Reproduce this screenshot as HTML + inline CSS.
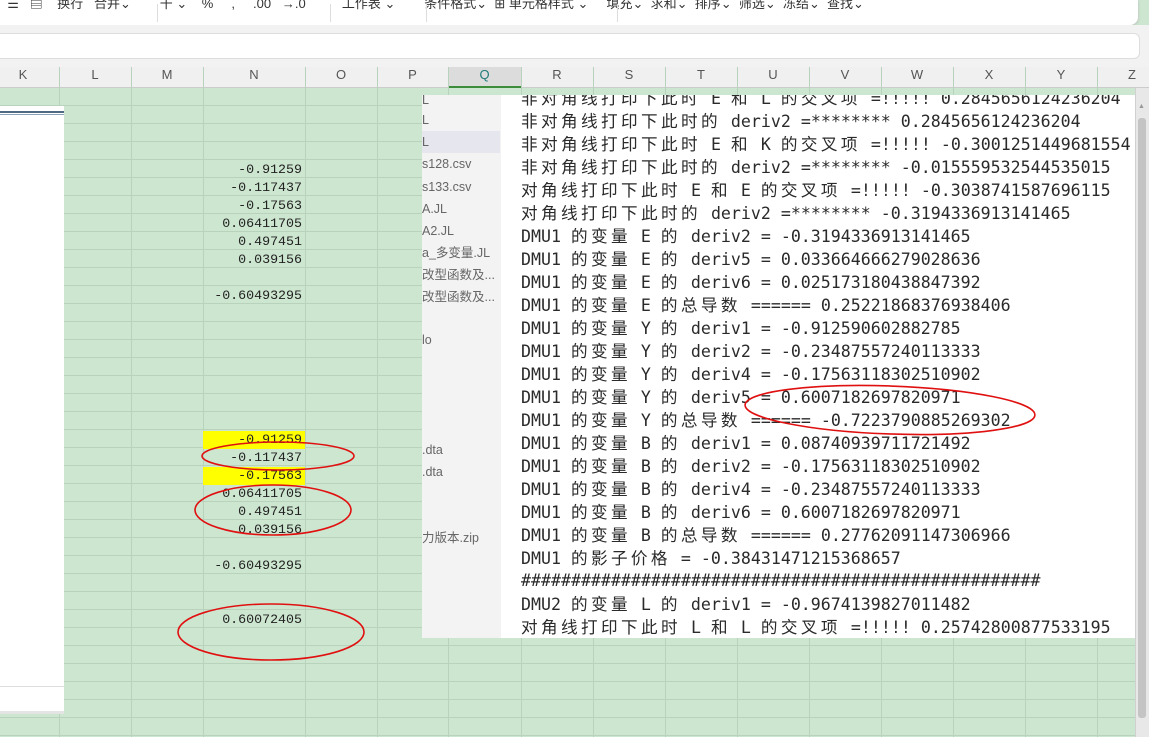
<!DOCTYPE html>
<html><head><meta charset="utf-8"><style>
*{margin:0;padding:0;box-sizing:border-box}
body{width:1149px;height:737px;overflow:hidden;background:#cde6d0;position:relative;font-family:"Liberation Sans","Noto Sans CJK SC",sans-serif}
.a{position:absolute}
.vl{position:absolute;width:1px;background:#b9d2bc}
.hl{position:absolute;height:1px;left:0;width:1149px;background:#b9d2bc}
.hd{position:absolute;top:67px;font-size:13px;color:#555;text-align:center}
.num{position:absolute;right:847px;font-family:"Liberation Mono","DejaVu Sans Mono",monospace;font-size:13.3px;color:#222;height:18px;line-height:18px;white-space:pre}
.ln{position:absolute;left:521px;font-family:"DejaVu Sans Mono","Noto Sans CJK SC",monospace;font-size:16.6px;color:#2a2a2a;white-space:pre;line-height:23px;height:23px}
.c{font-family:"Noto Sans CJK SC",sans-serif;letter-spacing:3.4px}
.f{position:absolute;left:422px;font-size:12.5px;color:#666;white-space:pre;line-height:20px}
</style></head><body>
<!-- toolbar -->
<div class="a" style="left:0;top:0;width:1138px;height:25px;background:#fff;border-radius:0 0 8px 0;box-shadow:0 1px 3px #bbb"></div>
<div class="a" style="left:0;top:25px;width:1149px;height:42px;background:#f2f2f2"></div>
<div class="a" style="left:0;top:-7px;font-size:13px;color:#333;white-space:pre">  ☰   ▤    换行   合并⌄        干 ⌄    %     ,     .00   →.0          工作表 ⌄        条件格式⌄  ⊞ 单元格样式 ⌄     填充⌄  求和⌄  排序⌄  筛选⌄  冻结⌄  查找⌄</div>
<div class="a" style="left:157px;top:4px;width:1px;height:18px;background:#ddd"></div>
<div class="a" style="left:330px;top:4px;width:1px;height:18px;background:#ddd"></div>
<div class="a" style="left:426px;top:4px;width:1px;height:18px;background:#ddd"></div>
<div class="a" style="left:617px;top:4px;width:1px;height:18px;background:#ddd"></div>
<div class="a" style="left:0;top:33px;width:1140px;height:26px;background:#fff;border:1px solid #ddd;border-left:none;border-radius:0 6px 6px 0"></div>
<!-- headers -->
<div class="a" style="left:0;top:67px;width:1149px;height:21px;background:#f0f0f0;border-bottom:1px solid #ccc"></div>
<div class="a" style="left:448px;top:67px;width:73px;height:21px;background:#dcdcdc;border-bottom:2px solid #3c8c3c"></div>
<div class="hd" style="left:0;width:46px">K</div>
<div class="hd" style="left:59px;width:72px">L</div>
<div class="hd" style="left:131px;width:72px">M</div>
<div class="hd" style="left:203px;width:102px">N</div>
<div class="hd" style="left:305px;width:72px">O</div>
<div class="hd" style="left:377px;width:71px">P</div>
<div class="hd" style="left:448px;width:73px;color:#1f7a7a">Q</div>
<div class="hd" style="left:521px;width:72px">R</div>
<div class="hd" style="left:593px;width:72px">S</div>
<div class="hd" style="left:665px;width:72px">T</div>
<div class="hd" style="left:737px;width:72px">U</div>
<div class="hd" style="left:809px;width:72px">V</div>
<div class="hd" style="left:881px;width:72px">W</div>
<div class="hd" style="left:953px;width:72px">X</div>
<div class="hd" style="left:1025px;width:72px">Y</div>
<div class="hd" style="left:1112px;width:40px">Z</div>
<!-- grid -->
<div id="g"></div>
<div class="vl" style="left:59px;top:67px;height:670px"></div>
<div class="vl" style="left:131px;top:67px;height:670px"></div>
<div class="vl" style="left:203px;top:67px;height:670px"></div>
<div class="vl" style="left:305px;top:67px;height:670px"></div>
<div class="vl" style="left:377px;top:67px;height:670px"></div>
<div class="vl" style="left:448px;top:67px;height:670px"></div>
<div class="vl" style="left:521px;top:67px;height:670px"></div>
<div class="vl" style="left:593px;top:67px;height:670px"></div>
<div class="vl" style="left:665px;top:67px;height:670px"></div>
<div class="vl" style="left:737px;top:67px;height:670px"></div>
<div class="vl" style="left:809px;top:67px;height:670px"></div>
<div class="vl" style="left:881px;top:67px;height:670px"></div>
<div class="vl" style="left:953px;top:67px;height:670px"></div>
<div class="vl" style="left:1025px;top:67px;height:670px"></div>
<div class="vl" style="left:1097px;top:67px;height:670px"></div>
<div class="a" style="left:0;top:88px;width:1149px;height:649px;background:repeating-linear-gradient(to bottom,transparent 0,transparent 17px,#b9d2bc 17px,#b9d2bc 18px);background-position:0 0"></div>
<!-- left white panel -->
<div class="a" style="left:0;top:106px;width:64px;height:606px;background:#fff"></div>
<div class="a" style="left:0;top:111px;width:64px;height:4px;border-top:2px solid #4d6a85;border-bottom:1px solid #8aa0b5"></div>
<div class="a" style="left:0;top:686px;width:64px;height:1px;background:#ddd"></div>
<div class="a" style="left:0;top:711px;width:64px;height:3px;background:#e4e4e4"></div>
<!-- yellow -->
<div class="a" style="left:203px;top:431px;width:102px;height:18px;background:#ffff00"></div>
<div class="a" style="left:203px;top:467px;width:102px;height:18px;background:#ffff00"></div>
<div class="num" style="top:161px">-0.91259</div>
<div class="num" style="top:179px">-0.117437</div>
<div class="num" style="top:197px">-0.17563</div>
<div class="num" style="top:215px">0.06411705</div>
<div class="num" style="top:233px">0.497451</div>
<div class="num" style="top:251px">0.039156</div>
<div class="num" style="top:287px">-0.60493295</div>
<div class="num" style="top:431px">-0.91259</div>
<div class="num" style="top:449px">-0.117437</div>
<div class="num" style="top:467px">-0.17563</div>
<div class="num" style="top:485px">0.06411705</div>
<div class="num" style="top:503px">0.497451</div>
<div class="num" style="top:521px">0.039156</div>
<div class="num" style="top:557px">-0.60493295</div>
<div class="num" style="top:611px">0.60072405</div>
<!-- file panel -->
<div class="a" style="left:422px;top:95px;width:79px;height:543px;background:#f3f3f3"></div>
<div class="a" style="left:422px;top:131px;width:78px;height:22px;background:#e6e6ef"></div>
<div class="f" style="top:90px">L</div>
<div class="f" style="top:110px">L</div>
<div class="f" style="top:132px">L</div>
<div class="f" style="top:154px">s128.csv</div>
<div class="f" style="top:177px">s133.csv</div>
<div class="f" style="top:199px">A.JL</div>
<div class="f" style="top:221px">A2.JL</div>
<div class="f" style="top:243px">a_多变量.JL</div>
<div class="f" style="top:265px">改型函数及...</div>
<div class="f" style="top:287px">改型函数及...</div>
<div class="f" style="top:330px">lo</div>
<div class="f" style="top:440px">.dta</div>
<div class="f" style="top:462px">.dta</div>
<div class="f" style="top:528px">力版本.zip</div>
<!-- console -->
<div class="a" style="left:501px;top:95px;width:634px;height:543px;background:#fff;overflow:hidden">
<div style="position:absolute;left:-501px;top:-95px;width:1149px;height:737px">
<div class="ln" style="top:86px"><span class="c">非对角线打印下此时</span> E <span class="c">和</span> L <span class="c">的交叉项</span> =!!!!! 0.2845656124236204</div>
<div class="ln" style="top:109px"><span class="c">非对角线打印下此时的</span> deriv2 =******** 0.2845656124236204</div>
<div class="ln" style="top:132px"><span class="c">非对角线打印下此时</span> E <span class="c">和</span> K <span class="c">的交叉项</span> =!!!!! -0.3001251449681554</div>
<div class="ln" style="top:155px"><span class="c">非对角线打印下此时的</span> deriv2 =******** -0.015559532544535015</div>
<div class="ln" style="top:178px"><span class="c">对角线打印下此时</span> E <span class="c">和</span> E <span class="c">的交叉项</span> =!!!!! -0.3038741587696115</div>
<div class="ln" style="top:201px"><span class="c">对角线打印下此时的</span> deriv2 =******** -0.3194336913141465</div>
<div class="ln" style="top:224px">DMU1 <span class="c">的变量</span> E <span class="c">的</span> deriv2 = -0.3194336913141465</div>
<div class="ln" style="top:247px">DMU1 <span class="c">的变量</span> E <span class="c">的</span> deriv5 = 0.033664666279028636</div>
<div class="ln" style="top:270px">DMU1 <span class="c">的变量</span> E <span class="c">的</span> deriv6 = 0.025173180438847392</div>
<div class="ln" style="top:293px">DMU1 <span class="c">的变量</span> E <span class="c">的总导数</span> ====== 0.25221868376938406</div>
<div class="ln" style="top:316px">DMU1 <span class="c">的变量</span> Y <span class="c">的</span> deriv1 = -0.912590602882785</div>
<div class="ln" style="top:339px">DMU1 <span class="c">的变量</span> Y <span class="c">的</span> deriv2 = -0.23487557240113333</div>
<div class="ln" style="top:362px">DMU1 <span class="c">的变量</span> Y <span class="c">的</span> deriv4 = -0.17563118302510902</div>
<div class="ln" style="top:385px">DMU1 <span class="c">的变量</span> Y <span class="c">的</span> deriv5 = 0.6007182697820971</div>
<div class="ln" style="top:408px">DMU1 <span class="c">的变量</span> Y <span class="c">的总导数</span> ====== -0.7223790885269302</div>
<div class="ln" style="top:431px">DMU1 <span class="c">的变量</span> B <span class="c">的</span> deriv1 = 0.08740939711721492</div>
<div class="ln" style="top:454px">DMU1 <span class="c">的变量</span> B <span class="c">的</span> deriv2 = -0.17563118302510902</div>
<div class="ln" style="top:477px">DMU1 <span class="c">的变量</span> B <span class="c">的</span> deriv4 = -0.23487557240113333</div>
<div class="ln" style="top:500px">DMU1 <span class="c">的变量</span> B <span class="c">的</span> deriv6 = 0.6007182697820971</div>
<div class="ln" style="top:523px">DMU1 <span class="c">的变量</span> B <span class="c">的总导数</span> ====== 0.27762091147306966</div>
<div class="ln" style="top:546px">DMU1 <span class="c">的影子价格</span> = -0.38431471215368657</div>
<div class="ln" style="top:569px">####################################################</div>
<div class="ln" style="top:592px">DMU2 <span class="c">的变量</span> L <span class="c">的</span> deriv1 = -0.9674139827011482</div>
<div class="ln" style="top:615px"><span class="c">对角线打印下此时</span> L <span class="c">和</span> L <span class="c">的交叉项</span> =!!!!! 0.25742800877533195</div>
</div></div>
<!-- scrollbar -->
<div class="a" style="left:1135px;top:88px;width:14px;height:649px;background:#e8e8e8;border-left:1px solid #d0d0d0"></div>
<div class="a" style="left:1138px;top:103px;font-size:7px;color:#999">▲</div>
<div class="a" style="left:1138px;top:118px;width:8px;height:600px;background:#c4c4c4;border-radius:3px"></div>
<!-- ellipses -->
<svg class="a" style="left:0;top:0" width="1149" height="737">
<g fill="none" stroke="#e01010" stroke-width="1.6">
<ellipse cx="278" cy="456" rx="76" ry="14"/>
<ellipse cx="273" cy="510" rx="78" ry="25"/>
<ellipse cx="271" cy="632" rx="93" ry="28"/>
<ellipse cx="890" cy="410" rx="145" ry="24" transform="rotate(2 890 410)"/>
</g></svg>
</body></html>
